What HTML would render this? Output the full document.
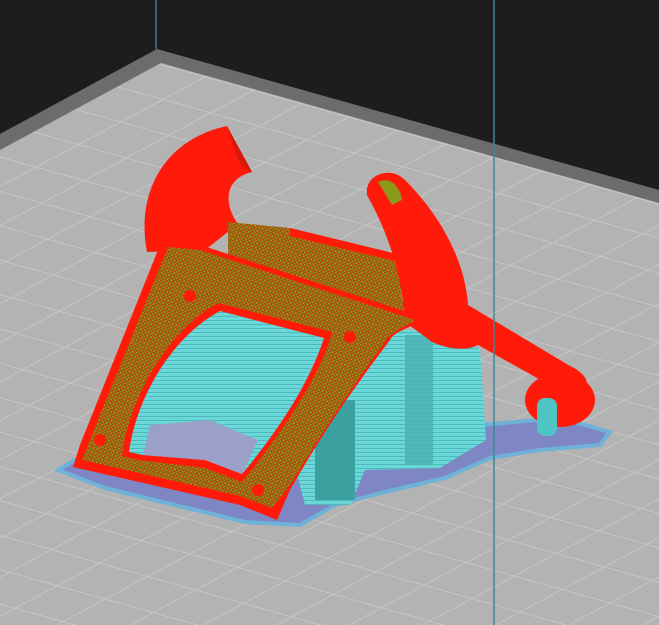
<!DOCTYPE html>
<html><head><meta charset="utf-8"><style>
html,body{margin:0;padding:0;background:#1d1d1d;overflow:hidden}
svg{display:block}
</style></head><body>
<svg width="659" height="625" viewBox="0 0 659 625" xmlns="http://www.w3.org/2000/svg">
<defs>
<pattern id="grid" width="48" height="48" patternUnits="userSpaceOnUse" patternTransform="matrix(1,0.28,-0.88,0.47,157,63)">
<rect width="48" height="48" fill="#b3b3b3"/>
<path d="M0 0H48M0 0V48" stroke="#cacaca" stroke-width="2.2" fill="none"/>
</pattern>
<pattern id="olive" width="4" height="4" patternUnits="userSpaceOnUse" patternTransform="rotate(20)">
<rect width="4" height="4" fill="#b8400e"/>
<rect width="2" height="2" fill="#8c9a1c"/>
<rect x="2" y="2" width="2" height="2" fill="#7e8c18"/>
</pattern>
<pattern id="cy" width="6" height="4" patternUnits="userSpaceOnUse">
<rect width="6" height="4" fill="#6ad8d8"/>
<rect width="6" height="1" fill="#4fb8bc"/>
</pattern>
</defs>
<rect width="659" height="625" fill="#1d1d1d"/>
<line x1="156" y1="0" x2="156" y2="49" stroke="#3d7d8c" stroke-width="1.5"/>
<polygon points="157,49 659,190 659,625 0,625 0,134" fill="#6c6c6c"/>
<polygon points="161,63 659,203 659,625 0,625 0,150" fill="url(#grid)"/>
<!-- base raft -->
<path d="M58,470 L100,445 L150,420 L205,400 L420,395 L480,425 L560,418 L610,432 L600,445 L540,450 L490,458 L445,478 L385,492 L335,505 L300,525 L245,522 L175,505 L105,488 Z" fill="#7f86c4" stroke="#6fb2d8" stroke-width="4"/>
<!-- supports -->
<path d="M158,258 L200,270 L330,318 L400,330 L460,330 L480,350 L486,440 L440,468 L365,470 L350,505 L305,505 L298,478 L250,440 L150,425 L152,330 Z" fill="url(#cy)"/>
<rect x="262" y="325" width="30" height="80" fill="#3fa6a6"/>
<rect x="315" y="400" width="40" height="100" fill="#3aa0a0"/>
<rect x="405" y="335" width="28" height="130" fill="#48b2b2" opacity="0.8"/>
<rect x="160" y="360" width="30" height="60" fill="#3fa0a0" opacity="0.8"/>
<!-- left duct arm -->
<path d="M147,252 C136,195 162,140 227,126 L252,172 C226,178 222,202 238,224 L205,250 Z" fill="#ff1a0a"/>
<path d="M228,128 L252,172 C242,170 236,160 228,128 Z" fill="#d81808"/>
<!-- duct box -->
<path d="M228,222 L290,228 L397,254 L402,300 L425,318 L330,318 L228,275 Z" fill="url(#olive)"/>
<path d="M290,228 L397,254 L399,262 L290,236 Z" fill="#ff1a0a"/>
<!-- right tube -->
<path d="M367,195 C364,175 390,165 405,180 C440,215 465,260 468,305 L570,366 C590,375 592,390 580,395 L537,378 L478,345 C465,352 445,348 432,342 L405,322 C402,280 392,240 367,195 Z" fill="#ff1a0a"/>
<path d="M378,182 C390,176 400,186 402,200 L392,205 Z" fill="#8c9a1c"/>
<!-- ring -->
<ellipse cx="560" cy="400" rx="35" ry="27" fill="#ff1a0a"/>
<rect x="537" y="398" width="20" height="38" rx="8" fill="#4fc4c4"/>
<!-- frame -->
<path d="M162,240 L200,245 L423,317 C410,330 395,330 390,340 C360,380 330,420 290,490 L277,520 L240,505 L73,467 L80,445 Z" fill="#ff1a0a"/>
<path d="M168,247 L200,250 L415,320 L390,335 C360,375 330,420 292,482 L272,508 L240,496 L82,460 L88,445 Z" fill="url(#olive)"/>
<path d="M122,456 C128,400 168,330 218,303 L332,332 C322,370 292,420 242,482 L205,468 L138,460 Z" fill="#ff1a0a"/>
<path d="M129,452 C136,400 170,338 220,311 L324,338 C312,375 287,420 242,474 L205,460 L143,455 Z" fill="url(#cy)"/>
<path d="M143,455 L150,425 L210,420 L258,440 L242,474 L205,460 Z" fill="#9aa0c8"/>
<circle cx="190" cy="296" r="6" fill="#ff1a0a"/>
<circle cx="350" cy="337" r="6" fill="#ff1a0a"/>
<circle cx="100" cy="440" r="6" fill="#ff1a0a"/>
<circle cx="258" cy="490" r="6" fill="#ff1a0a"/>
<!-- cyan line -->
<line x1="494" y1="0" x2="494" y2="625" stroke="#3d8898" stroke-width="1.5"/>
</svg>
</body></html>
